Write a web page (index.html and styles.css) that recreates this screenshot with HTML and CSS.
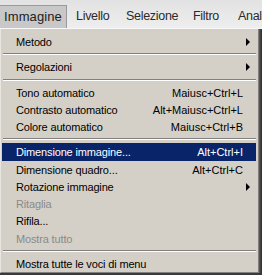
FILE: index.html
```html
<!DOCTYPE html>
<html>
<head>
<meta charset="utf-8">
<link rel="stylesheet" href="styles.css">
</head>
<body>
<div class="screen">
  <div class="menubar">
    <div class="mb-item active">Immagine</div>
    <div class="mb-item w-liv">Livello</div>
    <div class="mb-item w-sel">Selezione</div>
    <div class="mb-item w-fil">Filtro</div>
    <div class="mb-item w-ana">Anal</div>
  </div>
  <div class="menu-wrap">
    <div class="menu">
      <div class="item"><span class="label">Metodo</span><span class="arrow"></span></div>
      <div class="sep"></div>
      <div class="item"><span class="label">Regolazioni</span><span class="arrow"></span></div>
      <div class="sep"></div>
      <div class="item"><span class="label">Tono automatico</span><span class="key">Maiusc+Ctrl+L</span></div>
      <div class="item"><span class="label">Contrasto automatico</span><span class="key">Alt+Maiusc+Ctrl+L</span></div>
      <div class="item"><span class="label">Colore automatico</span><span class="key">Maiusc+Ctrl+B</span></div>
      <div class="sep"></div>
      <div class="item selected"><span class="label">Dimensione immagine...</span><span class="key">Alt+Ctrl+I</span></div>
      <div class="item"><span class="label">Dimensione quadro...</span><span class="key">Alt+Ctrl+C</span></div>
      <div class="item"><span class="label">Rotazione immagine</span><span class="arrow"></span></div>
      <div class="item disabled"><span class="label">Ritaglia</span></div>
      <div class="item"><span class="label">Rifila...</span></div>
      <div class="item disabled"><span class="label">Mostra tutto</span></div>
      <div class="sep"></div>
      <div class="item"><span class="label">Mostra tutte le voci di menu</span></div>
    </div>
    <div class="edge"></div>
  </div>
</div>
</body>
</html>
```
FILE: styles.css
```css
html, body {
  margin: 0;
  padding: 0;
  width: 262px;
  height: 275px;
  overflow: hidden;
  background: #3a3a3a;
}
.screen {
  width: 262px;
  height: 275px;
  display: flex;
  flex-direction: column;
  font-family: "Liberation Sans", Arial, sans-serif;
}
.menubar {
  height: 29px;
  box-sizing: border-box;
  padding-top: 5px;
  display: flex;
  background: linear-gradient(#e2e2e2, #eeeeee);
  border-bottom: 1px solid #f8f8f8;
  font-size: 12.5px;
  letter-spacing: -0.3px;
  color: #2a2a2a;
  white-space: nowrap;
}
.mb-item {
  line-height: 22px;
  box-sizing: border-box;
  flex: none;
}
.mb-item.active {
  width: 67px;
  background: #c8c8c8;
  border: 1px solid #9a9a9a;
  border-bottom: none;
  border-left: none;
  padding-left: 4px;
  line-height: 21px;
  font-size: 13px;
  letter-spacing: 0.1px;
  color: #222;
}
.w-liv { width: 59px; padding-left: 9px; }
.w-sel { width: 67px; padding-left: 0; }
.w-fil { width: 45px; padding-left: 0; }
.w-ana { width: 24px; padding-left: 0; }
.menu-wrap {
  display: flex;
  height: 244px;
}
.menu {
  flex: 1;
  background: #d4d0c8;
  border-left: 1px solid #e8e6e0;
  border-right: 1px solid #808080;
  border-bottom: 1px solid #808080;
  padding: 4px 2px 0 1px;
  font-size: 11px;
  color: #000;
}
.edge {
  width: 3px;
  background: linear-gradient(90deg, #5a5a5a, #2c2c2c);
}
.item {
  height: 17.25px;
  display: flex;
  align-items: center;
  padding: 1px 13px 0 14px;
  box-sizing: border-box;
  letter-spacing: -0.15px;
}
.label {
  flex: 1;
  white-space: nowrap;
}
.key {
  white-space: nowrap;
  letter-spacing: 0;
}
.arrow {
  width: 0;
  height: 0;
  border-top: 4px solid transparent;
  border-bottom: 4px solid transparent;
  border-left: 4px solid #000;
  margin-right: -7px;
}
.selected {
  background: #0a246a;
  color: #fff;
}
.disabled {
  color: #8a8a8a;
}
.sep {
  height: 8px;
  display: flex;
  flex-direction: column;
  justify-content: center;
  margin: 0 0 0 1px;
}
.sep::before {
  content: "";
  display: block;
  height: 1px;
  background: #808080;
}
.sep::after {
  content: "";
  display: block;
  height: 1px;
  background: #ffffff;
}
```
